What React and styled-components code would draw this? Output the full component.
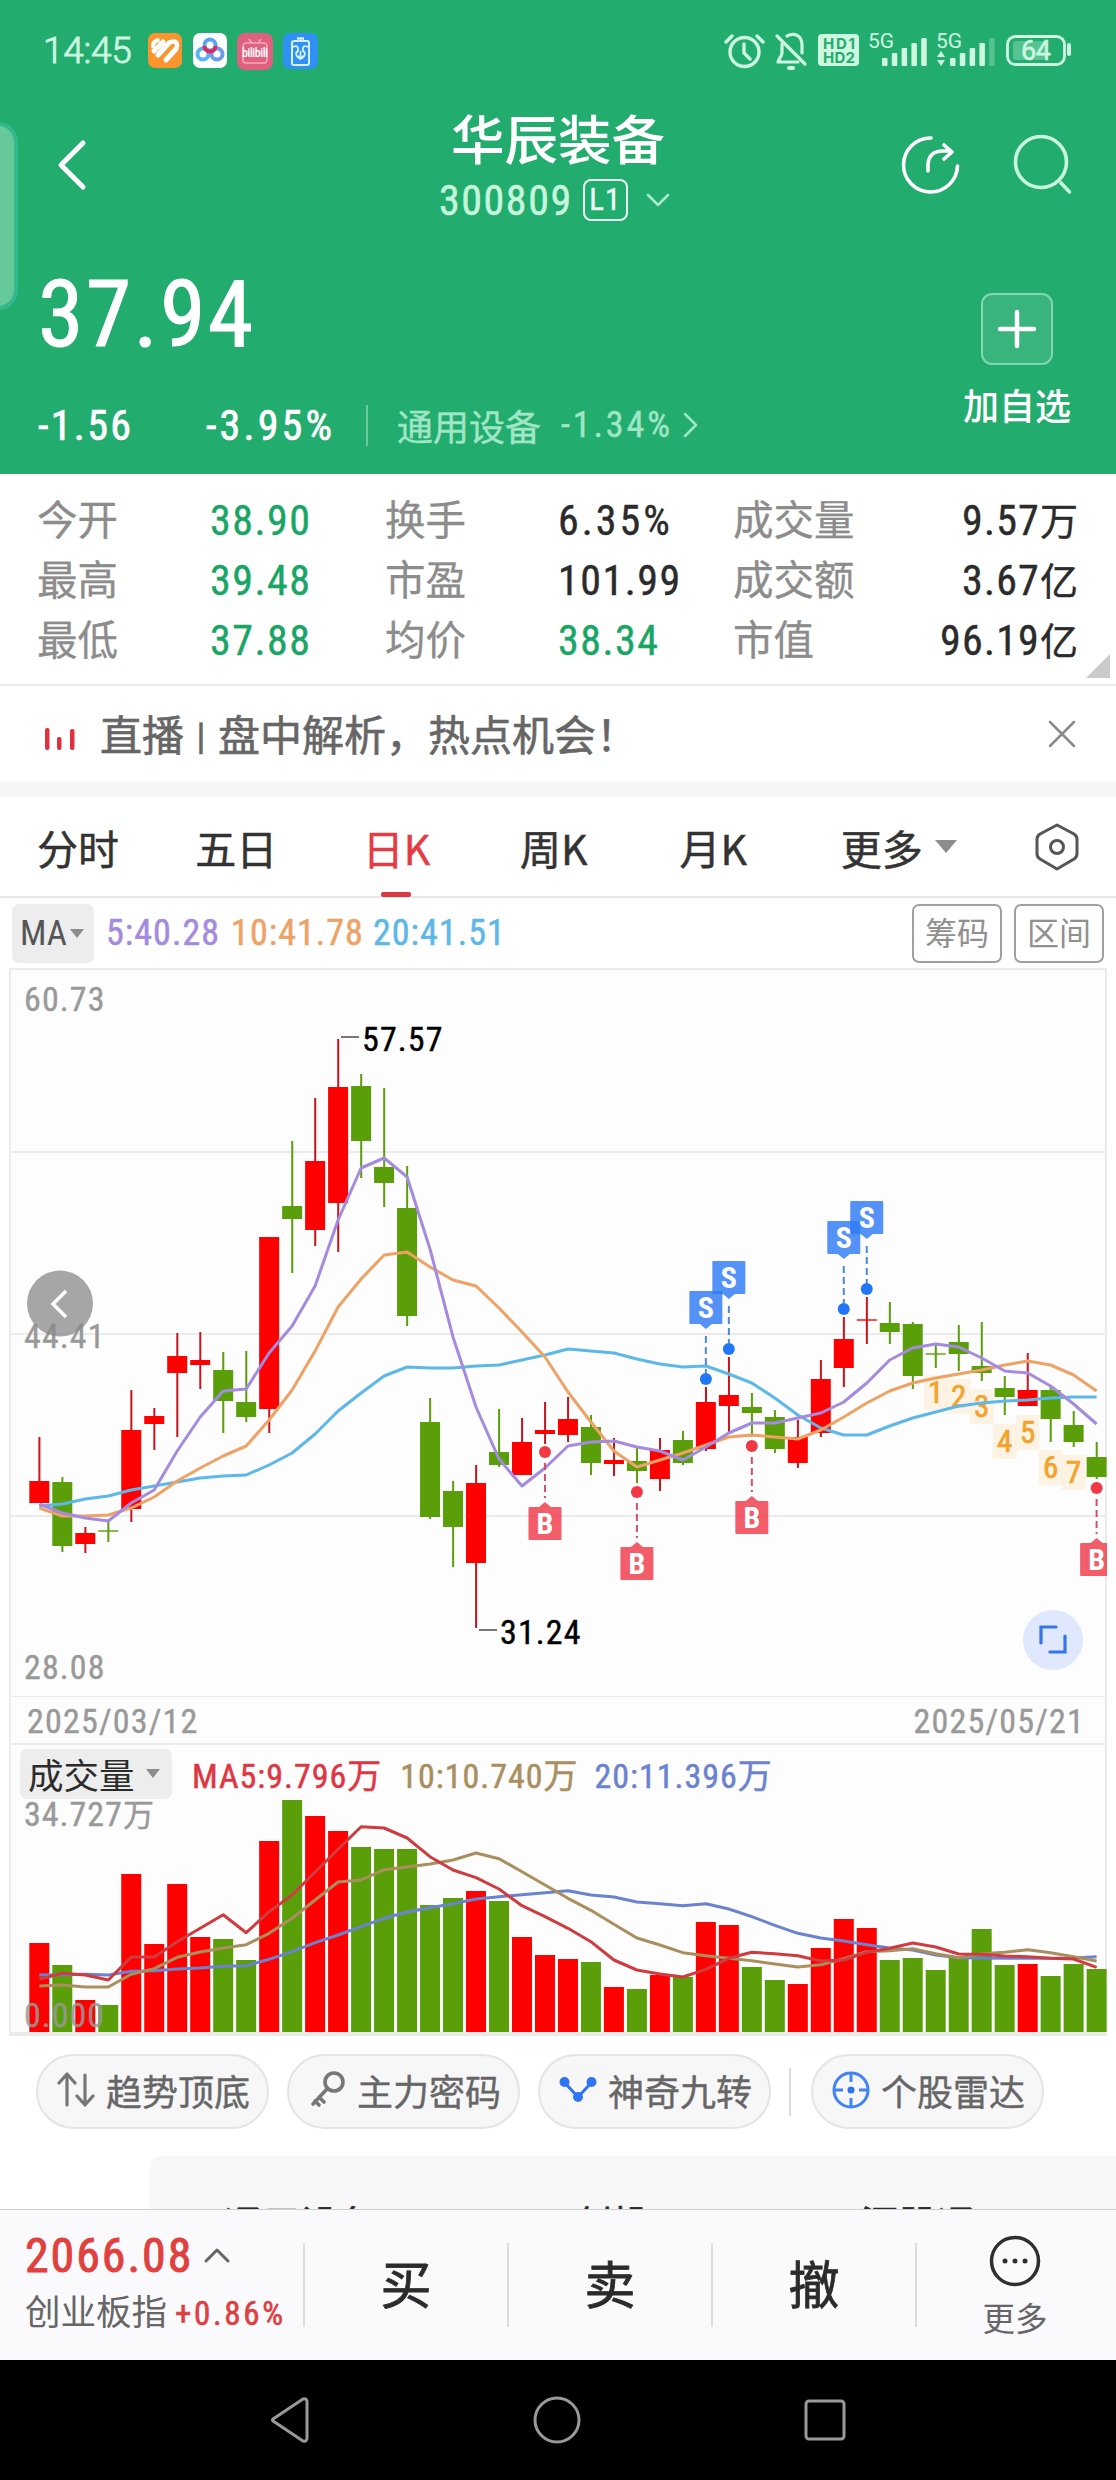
import React from 'react';
import styled, { createGlobalStyle } from 'styled-components';

const RED = '#ff0000';
const GREEN = '#5a9f0a';

// [up, high, bodyTop, bodyBottom, low]
const candles = [
  [1, 1437, 1481, 1503, 1503], [0, 1477, 1482, 1546, 1552], [1, 1527, 1533, 1544, 1553],
  [0, 1521, 1530, 1532, 1542], [1, 1390, 1430, 1509, 1522], [1, 1408, 1416, 1424, 1450],
  [1, 1333, 1356, 1373, 1437], [1, 1332, 1360, 1365, 1389], [0, 1352, 1370, 1401, 1433],
  [0, 1351, 1402, 1417, 1422], [1, 1237, 1237, 1409, 1433], [0, 1141, 1206, 1219, 1273],
  [1, 1098, 1161, 1230, 1246], [1, 1039, 1087, 1203, 1252], [0, 1074, 1086, 1141, 1178],
  [0, 1088, 1167, 1183, 1207], [0, 1166, 1208, 1316, 1326], [0, 1398, 1422, 1517, 1519],
  [0, 1481, 1491, 1527, 1567], [1, 1465, 1483, 1563, 1628], [0, 1409, 1452, 1465, 1467],
  [1, 1418, 1442, 1475, 1475], [1, 1402, 1430, 1434, 1444], [1, 1397, 1419, 1435, 1442],
  [0, 1415, 1427, 1463, 1475], [1, 1438, 1460, 1464, 1476], [0, 1448, 1461, 1471, 1483],
  [1, 1438, 1450, 1479, 1491], [0, 1431, 1440, 1463, 1465], [1, 1387, 1402, 1449, 1451],
  [1, 1357, 1395, 1406, 1433], [0, 1393, 1407, 1413, 1437], [0, 1410, 1417, 1449, 1453],
  [1, 1420, 1437, 1463, 1468], [1, 1360, 1379, 1433, 1437], [1, 1317, 1339, 1368, 1387],
  [1, 1297, 1319, 1321, 1344], [0, 1302, 1323, 1332, 1344], [0, 1322, 1324, 1376, 1389],
  [0, 1344, 1353, 1355, 1368], [0, 1325, 1342, 1354, 1371], [0, 1322, 1366, 1373, 1381],
  [0, 1376, 1388, 1397, 1415], [1, 1353, 1390, 1406, 1406], [0, 1387, 1390, 1419, 1442],
  [0, 1411, 1425, 1442, 1447], [0, 1442, 1457, 1477, 1479],
];

const ma5 = [1504, 1513, 1518, 1521, 1503, 1490, 1451, 1417, 1391, 1389, 1353, 1326, 1286, 1220, 1168, 1158, 1177, 1249, 1337, 1407, 1459, 1486, 1468, 1446, 1442, 1441, 1447, 1451, 1460, 1447, 1433, 1423, 1423, 1418, 1413, 1402, 1383, 1360, 1348, 1344, 1347, 1358, 1371, 1373, 1386, 1404, 1424];
const ma10 = [1508, 1516, 1516, 1515, 1508, 1497, 1481, 1468, 1456, 1446, 1420, 1390, 1351, 1307, 1279, 1255, 1252, 1267, 1280, 1286, 1308, 1332, 1357, 1392, 1422, 1451, 1467, 1460, 1453, 1445, 1437, 1435, 1437, 1439, 1430, 1417, 1403, 1391, 1383, 1378, 1374, 1370, 1365, 1361, 1365, 1375, 1391];
const ma20 = [1506, 1504, 1499, 1496, 1490, 1486, 1482, 1478, 1476, 1475, 1465, 1453, 1434, 1411, 1393, 1376, 1367, 1368, 1368, 1366, 1365, 1360, 1355, 1349, 1351, 1353, 1359, 1364, 1367, 1366, 1374, 1383, 1398, 1415, 1428, 1435, 1435, 1426, 1418, 1412, 1406, 1403, 1401, 1400, 1398, 1397, 1397];

const volumes = [89, 67, 32, 27, 158, 88, 148, 95, 93, 72, 191, 232, 216, 201, 185, 183, 183, 127, 134, 141, 131, 95, 77, 73, 70, 45, 43, 57, 55, 110, 107, 65, 52, 48, 84, 113, 104, 72, 74, 62, 74, 103, 67, 68, 56, 68, 63];
const vma5 = [718, 700, 705, 720, 651, 651, 605, 565, 524, 578, 515, 465, 396, 328, 260, 264, 294, 350, 390, 413, 447, 497, 530, 565, 605, 660, 690, 702, 711, 688, 655, 637, 641, 647, 663, 660, 637, 625, 609, 621, 642, 643, 648, 650, 655, 657, 682];
const vma10 = [738, 735, 741, 741, 703, 686, 652, 636, 624, 614, 580, 535, 480, 426, 420, 389, 381, 372, 360, 339, 356, 395, 435, 475, 511, 553, 594, 615, 638, 647, 655, 662, 672, 681, 674, 656, 635, 632, 626, 641, 653, 641, 637, 629, 638, 650, 663];
const vma20 = [705, 704, 703, 705, 694, 692, 687, 684, 679, 677, 658, 635, 608, 585, 560, 535, 516, 503, 491, 477, 470, 464, 458, 452, 465, 471, 486, 491, 497, 491, 507, 530, 556, 580, 594, 603, 614, 624, 630, 645, 653, 654, 655, 655, 655, 654, 650];

const sells = [[29, 1379], [30, 1349], [35, 1309], [36, 1289]];
const buys = [[22, 1452], [26, 1492], [31, 1446], [46, 1488]];
const turns = [[39, 1392], [40, 1396], [41, 1406], [42, 1441], [43, 1432], [44, 1467], [45, 1472]];

const cx = i => 39.3 + i * 22.985;
const line = (arr, y = v => v) => arr.map((v, i) => `${cx(i).toFixed(1)},${y(v).toFixed(1)}`).join(' ');
const volY = v => v / 3 - 60;

const GlobalStyle = createGlobalStyle`
  body {
    margin: 0;
    background: #fff;
  }
  * {
    box-sizing: border-box;
  }
  svg {
    display: block;
    flex-shrink: 0;
  }
`;

const Page = styled.div`
  position: relative;
  width: 1116px;
  height: 2480px;
  overflow: hidden;
  display: flex;
  flex-direction: column;
  background: #fff;
  font-family: "Roboto Condensed", "Noto Sans CJK SC", sans-serif;
  color: #2b2b2b;
  white-space: nowrap;
`;

const Header = styled.header`
  height: 474px;
  background: #22ac6e;
  color: #fff;
`;

const EdgeHandle = styled.div`
  position: absolute;
  left: -30px;
  top: 122px;
  width: 48px;
  height: 188px;
  border: 4px solid #33b98c;
  border-radius: 20px;
  background: #66c999;
`;

const StatusBar = styled.div`
  height: 100px;
  padding: 2px 44px 0 43px;
  display: flex;
  align-items: center;
  color: #cdf7e0;
`;

const Clock = styled.span`
  font: 300 37px/40px Roboto, sans-serif;
  width: 105px;
  letter-spacing: -0.3px;
  -webkit-text-stroke: 0.9px #cdf7e0;
`;

const AppIcons = styled.div`
  display: flex;
  gap: 10px;
  flex: 1;
`;

const TitleBar = styled.div`
  height: 130px;
  display: grid;
  grid-template-columns: 300px 1fr 300px;
`;

const BackCell = styled.div`
  padding: 38px 0 0 56px;
`;

const TitleCell = styled.div`
  padding-top: 5px;
  text-align: center;
`;

const StockName = styled.div`
  font: 500 53.5px/64px "Noto Sans CJK SC", sans-serif;
  height: 66px;
`;

const CodeRow = styled.div`
  display: flex;
  align-items: center;
  height: 58px;
  padding-left: 139px;
  font-size: 42px;
  letter-spacing: 0.037em;
  color: #c6f5dc;
  -webkit-text-stroke: 0.5px #c6f5dc;
`;

const Level = styled.span`
  width: 45px;
  height: 42px;
  margin: 0 17px 0 10px;
  border: 2px solid #e8fff3;
  border-radius: 8px;
  font: 31px/38px "Roboto Condensed", sans-serif;
  letter-spacing: 1px;
  color: #fff;
`;

const ActionCell = styled.div`
  display: flex;
  gap: 52px;
  padding: 33px 0 0 83px;
`;

const Quote = styled.div`
  display: flex;
  justify-content: space-between;
  padding: 0 45px 0 38px;
`;

const Price = styled.div`
  margin-top: 37px;
  font-size: 92px;
  line-height: 96px;
  letter-spacing: 0.025em;
  -webkit-text-stroke: 1px #fff;
`;

const ChangeRow = styled.div`
  display: flex;
  align-items: center;
  height: 50px;
  margin-top: 37px;
`;

const Change = styled.span`
  width: ${p => p.w}px;
  font-size: 42px;
  letter-spacing: ${p => p.spacing};
  -webkit-text-stroke: 0.7px #fff;
`;

const Sector = styled.span`
  display: flex;
  align-items: center;
  height: 41px;
  padding-left: 29px;
  border-left: 2px solid #6cc9a0;
  font-size: 36px;
  color: #a0e6c6;
  -webkit-text-stroke: 0.4px #a0e6c6;
  b {
    font-weight: 400;
    letter-spacing: 0.08em;
    margin: 0 9px 0 20px;
  }
`;

const AddBox = styled.div`
  margin-top: 63px;
  text-align: center;
  font: 500 36px/50px "Noto Sans CJK SC", sans-serif;
`;

const AddButton = styled.div`
  width: 72px;
  height: 72px;
  margin: 0 auto 14px;
  border: 2px solid #83d7b2;
  border-radius: 11px;
  background: #39b47c;
  display: flex;
  align-items: center;
  justify-content: center;
`;

const Stats = styled.section`
  position: relative;
  height: 212px;
  padding: 17px 38px 0 37px;
  border-bottom: 2px solid #e9e9e9;
  display: grid;
  grid-template-columns: 173px 175px 173px 175px 1fr auto;
  grid-auto-rows: 60px;
  line-height: 60px;
  font-size: 42px;
`;

const StatLabel = styled.span`
  font-size: 40.5px;
  color: #8c8c8c;
  -webkit-text-stroke: 0.3px #8c8c8c;
`;

const StatValue = styled.span`
  color: ${p => (p.down ? '#18a565' : '#2b2b2b')};
  letter-spacing: ${p => p.spacing};
  text-align: ${p => (p.right ? 'right' : 'left')};
  -webkit-text-stroke: 0.4px currentColor;
  i {
    font-style: normal;
    font-size: 38px;
    letter-spacing: 0;
  }
`;

const Corner = styled.div`
  position: absolute;
  right: 6px;
  bottom: 6px;
  border-left: 24px solid transparent;
  border-bottom: 24px solid #cacaca;
`;

const Live = styled.section`
  height: 111px;
  padding: 0 40px 0 44px;
  border-bottom: 15px solid #f6f6f7;
  display: flex;
  align-items: center;
  font-size: 42px;
  color: #666;
  p {
    flex: 1;
    margin: -3px 0 0 24px;
    -webkit-text-stroke: 0.6px #666;
  }
  span {
    font-size: 34px;
  }
`;

const LiveBars = styled.svg`
  margin-top: 9px;
`;

const Tabs = styled.nav`
  height: 101px;
  padding: 0 36px 0 37px;
  border-bottom: 2px solid #e9e9e9;
  display: flex;
  align-items: center;
  font-family: "Noto Sans CJK SC", sans-serif;
  font-size: 41px;
`;

const Tab = styled.div`
  position: relative;
  width: ${p => p.w}px;
  height: 99px;
  line-height: 100px;
  color: ${p => (p.active ? '#e63b45' : '#333')};
  -webkit-text-stroke: 0.5px currentColor;
  display: flex;
  align-items: center;
  &::after {
    content: '';
    display: ${p => (p.active ? 'block' : 'none')};
    position: absolute;
    left: 18px;
    bottom: -1px;
    width: 30px;
    height: 5px;
    border-radius: 2px;
    background: #dd3744;
  }
`;

const Triangle = styled.i`
  margin-left: ${p => p.gap}px;
  border: ${p => p.size}px solid transparent;
  border-top: ${p => p.size * 1.2}px solid #8c8c8c;
  border-bottom: 0;
`;

const Indicators = styled.div`
  height: 70px;
  padding: 0 12px;
  display: flex;
  align-items: center;
  font-size: 36px;
`;

const Select = styled.div`
  display: flex;
  align-items: center;
  width: ${p => p.w}px;
  height: ${p => p.h}px;
  padding-left: 8px;
  border-radius: 7px;
  background: #ededed;
  font-size: ${p => p.size}px;
  color: ${p => p.color || '#2b2b2b'};
`;

const MaValue = styled.span`
  color: ${p => p.color};
  margin-left: ${p => p.gap}px;
  letter-spacing: 0.029em;
  -webkit-text-stroke: 0.5px currentColor;
`;

const Outline = styled.div`
  width: 90px;
  height: 59px;
  margin-left: ${p => p.gap};
  border: 2px solid #a0a0a0;
  border-radius: 7px;
  line-height: 57px;
  text-align: center;
  font-size: 32px;
  color: #909090;
`;

const ChartFrame = styled.section`
  margin: 0 9px;
  border: 2px solid #ebebeb;
  border-bottom: 4px solid #ebeae8;
  background: #fdfdfd;
  height: 1068px;
  & > svg {
    margin-left: -11px;
  }
`;

const Dates = styled.div`
  display: flex;
  justify-content: space-between;
  height: 48px;
  padding: 0 20px 0 16px;
  border-bottom: 2px solid #ebebeb;
  line-height: 49px;
  font-size: 34px;
  letter-spacing: 0.035em;
  color: #999;
  -webkit-text-stroke: 0.4px #999;
`;

const VolumeHead = styled.div`
  display: flex;
  align-items: center;
  height: 55px;
  padding: 2px 0 0 9px;
  font-size: 34px;
`;

const Chips = styled.div`
  display: flex;
  align-items: center;
  padding: 18px 36px 27px;
`;

const Chip = styled.div`
  display: flex;
  align-items: center;
  gap: 11px;
  width: 233px;
  height: 75px;
  margin-right: 18px;
  padding: 0 0 3px 19px;
  border: 2px solid #e4e4e4;
  border-radius: 38px;
  background: #f7f7f8;
  font-size: 36px;
  color: #666;
  -webkit-text-stroke: 0.4px #666;
`;

const ChipDivider = styled.div`
  width: 2px;
  height: 48px;
  margin-right: 20px;
  background: #dcdcdc;
`;

const Panel = styled.div`
  height: 53px;
  margin-left: 150px;
  padding: 44px 0 0 74px;
  border-radius: 10px 0 0 0;
  background: #f7f7f7;
  overflow: hidden;
  display: grid;
  grid-template-columns: 350px 287px 1fr;
  font-size: 38px;
  line-height: 50px;
  -webkit-text-stroke: 0.6px #2b2b2b;
`;

const TradeBar = styled.footer`
  height: 151px;
  border-top: 1px solid #cfcfcf;
  background: #fafafc;
  display: grid;
  grid-template-columns: 303px repeat(4, 204px);
  padding-top: 33px;
  & > div + div {
    border-left: 2px solid #dcdce0;
    height: 84px;
    line-height: 88px;
    text-align: center;
  }
`;

const IndexCell = styled.div`
  padding-left: 25px;
  margin-top: -13px;
`;

const IndexValue = styled.div`
  display: flex;
  align-items: center;
  gap: 10px;
  height: 50px;
  font-size: 48px;
  letter-spacing: 0.04em;
  color: #e0403e;
  -webkit-text-stroke: 0.9px #e0403e;
`;

const IndexName = styled.div`
  margin-top: 8px;
  font-size: 35.5px;
  line-height: 50px;
  color: #666;
  b {
    margin-left: 8px;
    font-size: 33px;
    font-weight: 400;
    letter-spacing: 0.08em;
    color: #dd3f42;
    -webkit-text-stroke: 0.6px #dd3f42;
  }
`;

const Trade = styled.div`
  font-size: 51px;
  -webkit-text-stroke: 0.8px #2b2b2b;
`;

const More = styled.div`
  display: flex;
  flex-direction: column;
  align-items: center;
  padding-right: 6px;
  p {
    margin: 11px 0 0;
    font-size: 32.5px;
    line-height: 44px;
    color: #666;
  }
  svg {
    margin-top: -8px;
  }
`;

const SystemNav = styled.div`
  height: 120px;
  background: #000;
  display: flex;
  align-items: center;
  justify-content: center;
  gap: 223px;
`;

function Chevron({ w, h, d, stroke = 3, color = '#c6f5dc' }) {
  return (
    <svg width={w} height={h} fill="none" stroke={color} strokeWidth={stroke} strokeLinecap="round" strokeLinejoin="round">
      <path d={d} />
    </svg>
  );
}

function StatusIcons() {
  return (
    <svg width="350" height="44" viewBox="722 28 350 44" fill="none" stroke="#cdf7e0" strokeLinecap="round">
      <circle cx="744.5" cy="51" r="14.5" strokeWidth="3.4" />
      <path d="M744 43v9l6 6M726 41l6-6M763 41l-6-6" strokeWidth="3.4" />
      <g strokeWidth="3.2" strokeLinejoin="round">
        <path d="M777 35l28 28M782 43v9c0 3-4 7-4 9h20M787 35c8-4 15 0 15 9v8" />
        <path d="M789 67h4" strokeWidth="4" />
      </g>
      <rect x="818" y="33" width="41" height="32" rx="4" fill="#cdf7e0" stroke="none" />
      <g fill="#22ac6e" stroke="none" fontFamily="Inter, sans-serif" fontWeight="700" fontSize="15">
        <text x="823" y="47.5" textLength="32">HD1</text>
        <text x="823" y="61.5" textLength="32">HD2</text>
      </g>
      <g fill="#cdf7e0" stroke="none">
        <g fontFamily="Roboto, sans-serif" fontSize="21">
          <text x="868" y="47" textLength="26">5G</text>
          <text x="936" y="47" textLength="26">5G</text>
        </g>
        {[0, 1, 2, 3, 4].map(i => (
          <g key={i}>
            <rect x={882 + i * 9.8} y={57 - i * 5} width="5.5" height={8 + i * 5} rx="1" />
            <rect x={950 + i * 9.8} y={57 - i * 5} width="5.5" height={8 + i * 5} rx="1" opacity={i === 4 ? 0.3 : 1} />
          </g>
        ))}
        <path d="M937 56l4-6 4 6zM937 59l4 6 4-6z" />
        <rect x="1013" y="40" width="32" height="19" rx="3" opacity=".3" />
        <rect x="1067" y="42" width="4" height="13" rx="2" />
        <text x="1021" y="59" fontFamily="Roboto, sans-serif" fontSize="27" textLength="30" stroke="#cdf7e0" strokeWidth=".6">64</text>
      </g>
      <rect x="1007.5" y="35.5" width="57" height="28" rx="8" strokeWidth="2.8" />
    </svg>
  );
}

function AppLogos() {
  return (
    <AppIcons>
      <svg width="35" height="36" viewBox="0 0 35 36">
        <rect width="34" height="35" rx="7" fill="#f8952f" />
        <path d="M6 18L15 9M10 22L21 10M18 27L28 16" stroke="#fff" strokeWidth="5" strokeLinecap="round" />
        <path d="M5.500 15q-2-7 6-8" stroke="#fff" strokeWidth="4" fill="none" />
        <path d="M21 10q7-4 8 2 0 3-2 5" stroke="#fff" strokeWidth="4.5" fill="none" />
      </svg>
      <svg width="34" height="36" viewBox="0 0 34 36" fill="none" strokeWidth="4">
        <rect width="34" height="35" rx="7" fill="#fff" />
        <circle cx="10" cy="21" r="5.5" stroke="#59b5f2" />
        <circle cx="24" cy="21" r="5.5" stroke="#6c9cf0" />
        <circle cx="17" cy="12" r="5.5" stroke="#57a5ee" />
        <path d="M11.5 13a5.5 5.5 0 0 0 11 0" stroke="#e3265b" />
      </svg>
      <svg width="36" height="37" viewBox="0 0 36 37">
        <rect width="36" height="37" rx="8" fill="#e0607f" />
        <path d="M12 6l3 4M24 6l-3 4M9 10h18q3 0 3 4v12q0 4-3 4H9q-3 0-3-4V14q0-4 3-4z" stroke="#f1a9b9" strokeWidth="1.6" fill="none" />
        <text x="5" y="24" fill="#fff" fontFamily="Roboto Condensed, sans-serif" fontWeight="500" fontSize="12" textLength="26">bilibili</text>
      </svg>
      <svg width="35" height="36" viewBox="0 0 35 36" fill="none" stroke="#d8efff" strokeWidth="2">
        <rect width="35" height="36" rx="7" fill="#3091f5" stroke="none" />
        <rect x="9" y="8" width="17" height="24" rx="2" />
        <path d="M14 5.5h7" strokeWidth="2.5" />
        <path d="M10 14q4-2 5 1t-2 5q0 4 4.500 6 4.500-2 4.500-6-3-2-2-5t5-1M17.500 18v8M14.500 23l3 3 3-3" strokeWidth="1.8" />
      </svg>
    </AppIcons>
  );
}

function Flag({ i, dot, sell }) {
  const x = cx(i);
  const top = sell ? dot - 88 : dot + 55;
  const tip = sell ? `M${x - 6} ${top + 33}l6 5 6-5z` : `M${x - 6} ${top}l6-5 6 5z`;
  return (
    <g>
      <line
        x1={x}
        x2={x}
        y1={sell ? top + 45 : dot + 11}
        y2={sell ? dot - 6 : top - 9}
        stroke={sell ? '#4d88d8' : '#d4506a'}
        strokeWidth="2"
        strokeDasharray="7 4"
      />
      <circle cx={x} cy={dot} r="6" fill={sell ? '#2176f5' : '#f23745'} />
      <g fill={sell ? '#2f7bf6' : '#f23a4a'} opacity={0.82}>
        <path d={tip} />
        <rect x={x - 16.5} y={top} width="33" height="33" rx="1" />
      </g>
      <text x={x} y={top + 27} fill="#fff" fontSize="30" fontWeight="700" textAnchor="middle">{sell ? 'S' : 'B'}</text>
    </g>
  );
}

function PriceChart() {
  return (
    <svg width="1107" height="727" viewBox="0 970 1107 727" fontFamily="Roboto Condensed, sans-serif">
      {[1152, 1334, 1516, 1697].map(y => (
        <rect key={y} x="9" y={y - 1} width="1098" height="2" fill="#ebebeb" />
      ))}
      {candles.map(([up, high, top, bottom, low], i) => (
        <g key={i} fill={up ? RED : GREEN}>
          <rect x={cx(i) - 0.9} y={high} width="2" height={low - high} fill={up ? '#c8141c' : GREEN} />
          <rect x={cx(i) - 10} y={top} width="20" height={bottom - top} opacity={bottom - top < 3 ? 0.7 : 1} />
        </g>
      ))}
      <g fontSize="31" fill="#f3a32c" textAnchor="middle">
        {turns.map(([i, y], n) => (
          <g key={i}>
            <rect x={cx(i) - 12} y={y - 17} width="24" height="35" fill="#fdebd0" opacity=".55" />
            <text x={cx(i)} y={y + 11} stroke="#f3a32c" strokeWidth=".7">{n + 1}</text>
          </g>
        ))}
      </g>
      <g fill="none" strokeWidth="3" strokeLinejoin="round">
        <polyline points={line(ma20)} stroke="#5cb8e8" />
        <polyline points={line(ma10)} stroke="#eea266" />
        <polyline points={line(ma5)} stroke="#a48be0" />
      </g>
      {sells.map(([i, y]) => <Flag key={i} i={i} dot={y} sell />)}
      {buys.map(([i, y]) => <Flag key={i} i={i} dot={y} />)}
      <path d="M341 1037h18M479 1630h18" stroke="#777" strokeWidth="2" />
      <g fontSize="34" letterSpacing="1.1">
        <text x="362" y="1051" stroke="#000" strokeWidth=".4">57.57</text>
        <text x="500" y="1644" stroke="#000" strokeWidth=".4">31.24</text>
        <g fill="#999" stroke="#999" strokeWidth=".4">
          <text x="24" y="1011">60.73</text>
          <text x="24" y="1348">44.41</text>
          <text x="24" y="1679">28.08</text>
        </g>
      </g>
      <circle cx="60" cy="1303.5" r="33" fill="#888" opacity=".75" />
      <path d="M66 1291L53 1304l13 13" fill="none" stroke="#fff" strokeWidth="3.5" />
      <circle cx="1053" cy="1640" r="30" fill="#dfe8fc" />
      <path d="M1041 1643v-16h15M1065 1636v16h-15" fill="none" stroke="#3575ea" strokeWidth="3.2" strokeLinecap="round" />
    </svg>
  );
}

function VolumeChart() {
  return (
    <svg width="1107" height="232" viewBox="0 0 1107 232" fontFamily="Roboto Condensed, Noto Sans CJK SC, sans-serif">
      {volumes.map((v, i) => (
        <rect key={i} x={cx(i) - 10} y={232 - v} width="20" height={v} fill={candles[i][0] ? RED : GREEN} />
      ))}
      <g fill="none" strokeWidth="3" strokeLinejoin="round">
        <polyline points={line(vma20, volY)} stroke="#6b82d0" />
        <polyline points={line(vma10, volY)} stroke="#a98f5e" />
        <polyline points={line(vma5, volY)} stroke="#cf3b3e" />
      </g>
      <g fontSize="34" letterSpacing="1" fill="#999" stroke="#999" strokeWidth=".4">
        <text x="24" y="26">34.727<tspan fontSize="31">万</tspan></text>
        <text x="24" y="227" opacity=".85">0.000</text>
      </g>
    </svg>
  );
}

const stats = [
  ['今开', '38.90', 1, '换手', '6.35%', 0, '成交量', '9.57', '万'],
  ['最高', '39.48', 1, '市盈', '101.99', 0, '成交额', '3.67', '亿'],
  ['最低', '37.88', 1, '均价', '38.34', 1, '市值', '96.19', '亿'],
];

const tabs = [['分时', 159], ['五日', 168], ['日K', 158], ['周K', 160], ['月K', 162]];

export default function App() {
  return (
    <Page>
      <GlobalStyle />
      <Header>
        <StatusBar>
          <Clock>14:45</Clock>
          <AppLogos />
          <StatusIcons />
        </StatusBar>
        <TitleBar>
          <BackCell>
            <Chevron w={32} h={54} d="M27 5L5 27l22 22" stroke={5} color="#fff" />
          </BackCell>
          <TitleCell>
            <StockName>华辰装备</StockName>
            <CodeRow>
              300809
              <Level>L1</Level>
              <Chevron w={26} h={16} d="M3 3l10 10L23 3" stroke={2.5} color="#a9ecca" />
            </CodeRow>
          </TitleCell>
          <ActionCell>
            <svg width="62" height="64" viewBox="0 0 62 64" fill="none" stroke="#fff" strokeWidth="3.6" strokeLinecap="round" strokeLinejoin="round">
              <path d="M32 5A27 27 0 1 0 58.5 33" />
              <path d="M29 38v-7q1-13 15-13h8M45 12l8 7-8 7" />
            </svg>
            <svg width="62" height="64" viewBox="0 0 62 64" fill="none" stroke="#c9f6de" strokeWidth="3.6" strokeLinecap="round">
              <circle cx="28" cy="29" r="25.5" />
              <path d="M48 50l8.5 9" />
            </svg>
          </ActionCell>
        </TitleBar>
        <Quote>
          <div>
            <Price>37.94</Price>
            <ChangeRow>
              <Change w={168} spacing="0.055em">-1.56</Change>
              <Change w={160} spacing="0.075em">-3.95%</Change>
              <Sector>
                通用设备<b>-1.34%</b>
                <Chevron w={18} h={30} d="M3 4l11 11L3 26" stroke={2.5} color="#a0e6c6" />
              </Sector>
            </ChangeRow>
          </div>
          <AddBox>
            <AddButton>
              <Chevron w={40} h={40} d="M20 3v34M3 20h34" stroke={4.5} color="#fff" />
            </AddButton>
            加自选
          </AddBox>
        </Quote>
      </Header>
      <EdgeHandle />

      <Stats>
        {stats.map(([a, av, ad, b, bv, bd, c, cv, unit]) => (
          <React.Fragment key={a}>
            <StatLabel>{a}</StatLabel>
            <StatValue down={ad} spacing="0.036em">{av}</StatValue>
            <StatLabel>{b}</StatLabel>
            <StatValue down={bd} spacing={bv.endsWith('%') ? '0.072em' : '0.036em'}>{bv}</StatValue>
            <StatLabel>{c}</StatLabel>
            <StatValue right spacing="0.028em">{cv}<i>{unit}</i></StatValue>
          </React.Fragment>
        ))}
        <Corner />
      </Stats>

      <Live>
        <LiveBars width="32" height="24" fill="#e0323c">
          <rect x="1" y="1" width="4.5" height="22" rx="2" />
          <rect x="13" y="10" width="4.5" height="13" rx="2" />
          <rect x="26" y="2" width="4.5" height="21" rx="2" />
        </LiveBars>
        <p>直播<span>丨</span>盘中解析，热点机会！</p>
        <Chevron w={28} h={28} d="M2 2l24 24M26 2L2 26" stroke={2.5} color="#8a8a8a" />
      </Live>

      <Tabs>
        {tabs.map(([name, w]) => <Tab key={name} w={w} active={name === '日K'}>{name}</Tab>)}
        <Tab w={194}>更多<Triangle size={11} gap={12} /></Tab>
        <svg width="46" height="50" viewBox="0 0 46 50" fill="none" stroke="#555" strokeWidth="3" strokeLinejoin="round">
          <path d="M23 3L40 12q3 2 3 5v15q0 3-3 5L23 47 6 37q-3-2-3-5V17q0-3 3-5z" />
          <circle cx="23" cy="25" r="6.5" />
        </svg>
      </Tabs>

      <Indicators>
        <Select w={82} h={59} size={35} color="#555">MA<Triangle size={7.5} gap={3} /></Select>
        <MaValue color="#a48be0" gap={12}>5:40.28</MaValue>
        <MaValue color="#eea266" gap={11}>10:41.78</MaValue>
        <MaValue color="#5cb8e8" gap={9}>20:41.51</MaValue>
        <Outline gap="auto">筹码</Outline>
        <Outline gap="12px">区间</Outline>
      </Indicators>

      <ChartFrame>
        <PriceChart />
        <Dates>
          <span>2025/03/12</span>
          <span>2025/05/21</span>
        </Dates>
        <VolumeHead>
          <Select w={152} h={50} size={35.5}>成交量<Triangle size={7.5} gap={11} /></Select>
          <MaValue color="#dd3744" gap={20}>MA5:9.796万</MaValue>
          <MaValue color="#a98f5e" gap={18}>10:10.740万</MaValue>
          <MaValue color="#6b82d0" gap={16}>20:11.396万</MaValue>
        </VolumeHead>
        <VolumeChart />
      </ChartFrame>

      <Chips>
        <Chip>
          <svg width="38" height="40" fill="none" stroke="#777" strokeWidth="3.2" strokeLinecap="round" strokeLinejoin="round">
            <path d="M10 35V5M2 13l8-9 8 9M28 5v29M20 26l8 9 8-9" />
          </svg>
          趋势顶底
        </Chip>
        <Chip>
          <svg width="38" height="40" fill="none" stroke="#777" strokeWidth="3.6" strokeLinecap="round">
            <circle cx="26" cy="12" r="9" />
            <path d="M19 19L5 34M11 27l5 5M7 31l4 4" />
          </svg>
          主力密码
        </Chip>
        <Chip>
          <svg width="38" height="40" fill="#2f74f5" stroke="#2f74f5" strokeWidth="3">
            <path d="M5 12l14 15 14-15" fill="none" />
            <circle cx="5.5" cy="12" r="3.5" />
            <circle cx="19" cy="27" r="3.5" />
            <circle cx="32.5" cy="12" r="3.5" />
          </svg>
          神奇九转
        </Chip>
        <ChipDivider />
        <Chip>
          <svg width="38" height="40" fill="none" stroke="#3f83f6" strokeWidth="3">
            <circle cx="19" cy="20" r="17" />
            <path d="M19 3v9M19 28v9M2 20h9M27 20h9" />
            <circle cx="19" cy="20" r="3.5" fill="#2f74f5" stroke="none" />
          </svg>
          个股雷达
        </Chip>
      </Chips>

      <Panel>
        <span>通用设备</span>
        <span>创投</span>
        <span>深股通</span>
      </Panel>

      <TradeBar>
        <IndexCell>
          <IndexValue>
            2066.08
            <Chevron w={28} h={18} d="M3 15L14 4l11 11" stroke={3} color="#666" />
          </IndexValue>
          <IndexName>创业板指<b>+0.86%</b></IndexName>
        </IndexCell>
        <Trade>买</Trade>
        <Trade>卖</Trade>
        <Trade>撤</Trade>
        <More>
          <svg width="52" height="52" fill="#2f2f31">
            <circle cx="26" cy="26" r="23.5" fill="none" stroke="#2f2f31" strokeWidth="3.5" />
            <circle cx="16" cy="26" r="2.5" />
            <circle cx="26" cy="26" r="2.5" />
            <circle cx="36" cy="26" r="2.5" />
          </svg>
          <p>更多</p>
        </More>
      </TradeBar>

      <SystemNav>
        <svg width="40" height="48" fill="none" stroke="#999" strokeWidth="3" strokeLinejoin="round">
          <path d="M3 23L33 3q4-1 4 3v36q0 4-4 3L3 25q-1-1 0-2z" />
        </svg>
        <svg width="48" height="48" fill="none" stroke="#999" strokeWidth="3">
          <circle cx="24" cy="24" r="22" />
        </svg>
        <svg width="42" height="42" fill="none" stroke="#999" strokeWidth="3">
          <rect x="2" y="2" width="38" height="38" rx="3" />
        </svg>
      </SystemNav>
    </Page>
  );
}
